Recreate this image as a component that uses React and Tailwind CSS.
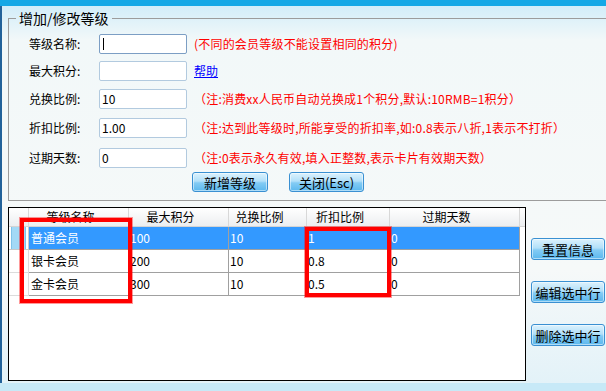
import React from "react";

const fields = [
  { label: "等级名称:", value: "", note: "(不同的会员等级不能设置相同的积分)", cursor: true, gap: "mt-0" },
  { label: "最大积分:", value: "", link: "帮助", gap: "mt-[7px]" },
  { label: "兑换比例:", value: "10", note: "（注:消费xx人民币自动兑换成1个积分,默认:10RMB=1积分）", gap: "mt-[8px]" },
  { label: "折扣比例:", value: "1.00", note: "（注:达到此等级时,所能享受的折扣率,如:0.8表示八折,1表示不打折）", gap: "mt-[9px]" },
  { label: "过期天数:", value: "0", note: "（注:0表示永久有效,填入正整数,表示卡片有效期天数）", gap: "mt-[10px]" },
];

const columns = [
  { title: "等级名称", w: "w-[100px]" },
  { title: "最大积分", w: "w-[100px]" },
  { title: "兑换比例", w: "w-[78px]" },
  { title: "折扣比例", w: "w-[83px]" },
  { title: "过期天数", w: "w-[130px]" },
];

const rows = [
  ["普通会员", "100", "10", "1", "0"],
  ["银卡会员", "200", "10", "0.8", "0"],
  ["金卡会员", "300", "10", "0.5", "0"],
];

const btn =
  "flex items-center justify-center rounded-[3px] border border-[#3a90d2] bg-[linear-gradient(to_bottom,#dcf2fd_0%,#b2e0f9_45%,#83cbf4_55%,#5bb8ee_100%)] shadow-[inset_0_0_0_1px_rgba(255,255,255,0.5)] text-[13px] leading-none text-black";

export default function App() {
  return (
    <div className="w-[606px] h-[391px] overflow-hidden flex flex-col font-['Noto_Sans_CJK_SC','Liberation_Sans',sans-serif] text-[12px] text-black">
      <div className="h-[6px] shrink-0 bg-[#15a8e6]" />

      <div className="flex-1 min-h-0 flex flex-col border-l-2 border-[#22629a] bg-[linear-gradient(to_bottom,#d2edf9_0%,#f2f8f9_9%,#f6f9f9_70%,#e3f2f8_100%)] pl-[6px] overflow-hidden">
        {/* group box */}
        <fieldset className="mt-[4px] w-[640px] shrink-0 border border-[#9c9c9c] p-0">
          <legend className="ml-[7px] px-[3px] text-[14px] leading-[16px]">增加/修改等级</legend>
          <div className="pl-[20px] pt-[8px] pb-[8px]">
            {fields.map((f) => (
              <div key={f.label} className={`flex items-center h-[20px] ${f.gap}`}>
                <div className="w-[70px] shrink-0">{f.label}</div>
                <div
                  className={`w-[88px] h-[20px] shrink-0 flex items-center px-[2px] bg-white rounded-[2px] border ${
                    f.cursor ? "border-[#7c9ec4]" : "border-[#b2cadf]"
                  }`}
                >
                  {f.cursor && <span className="ml-[1px] w-px h-[12px] bg-black" />}
                  <span className="leading-none">{f.value}</span>
                </div>
                {f.note && <div className="ml-[7px] whitespace-nowrap text-[#ff0000] tracking-[0.2px]">{f.note}</div>}
                {f.link && <a className="ml-[7px] text-[#0000ff] underline">{f.link}</a>}
              </div>
            ))}
            <div className="flex mt-[4px] ml-[163px]">
              <button className={`${btn} w-[76px] h-[20px]`}>新增等级</button>
              <button className={`${btn} w-[75px] h-[20px] ml-[21px]`}>关闭(Esc)</button>
            </div>
          </div>
        </fieldset>

        {/* grid + side buttons */}
        <div className="flex mt-[6px]">
          <div className="relative w-[518px] h-[174px] shrink-0 border border-black bg-white">
            <div className="flex h-[19px] border-b border-[#d4d4d4] bg-[linear-gradient(to_bottom,#ffffff,#eceef0)]">
              <div className="w-[20px] border-r border-[#d8d8d8]" />
              {columns.map((c) => (
                <div
                  key={c.title}
                  className={`${c.w} border-r border-[#d8d8d8] flex items-center justify-center pr-[16px] text-[12px]`}
                >
                  {c.title}
                </div>
              ))}
            </div>
            {rows.map((r, i) => {
              const sel = i === 0;
              return (
                <div key={r[0]} className="flex h-[23px]">
                  <div
                    className={`w-[20px] border-r border-b ${
                      sel ? "border-[#c8c8c8] bg-white pl-[2px] pr-[2px]" : "border-[#dcdcdc]"
                    }`}
                  >
                    {sel && <div className="h-full bg-[#a3d9f6] border-x border-[#7fc3ea]" />}
                  </div>
                  {columns.map((c, j) => (
                    <div
                      key={c.title}
                      className={`${c.w} border-r border-b border-[#a0a0a0] flex items-center ${
                        j === 0 ? "pl-[2px]" : "pl-[1px]"
                      } ${sel ? "bg-[#3399ff] text-white" : ""}`}
                    >
                      {r[j]}
                    </div>
                  ))}
                </div>
              );
            })}

            {/* highlight boxes */}
            <div className="absolute left-[11px] top-[10px] w-[112px] h-[85px] border-[4px] border-[#ff0000] ring-1 ring-[#ff0000]/40" />
            <div className="absolute left-[296px] top-[19px] w-[86px] h-[70px] border-[4px] border-[#ff0000] ring-1 ring-[#ff0000]/40" />
          </div>

          <div className="ml-[5px] mt-[31px] flex flex-col gap-[21px]">
            <button className={`${btn} w-[74px] h-[22px] text-[12px]`}>重置信息</button>
            <button className={`${btn} w-[74px] h-[22px] text-[12px]`}>编辑选中行</button>
            <button className={`${btn} w-[74px] h-[22px] text-[12px]`}>删除选中行</button>
          </div>
        </div>
      </div>

      <div className="h-[8px] shrink-0 bg-[#c7e9f7]" />
    </div>
  );
}
